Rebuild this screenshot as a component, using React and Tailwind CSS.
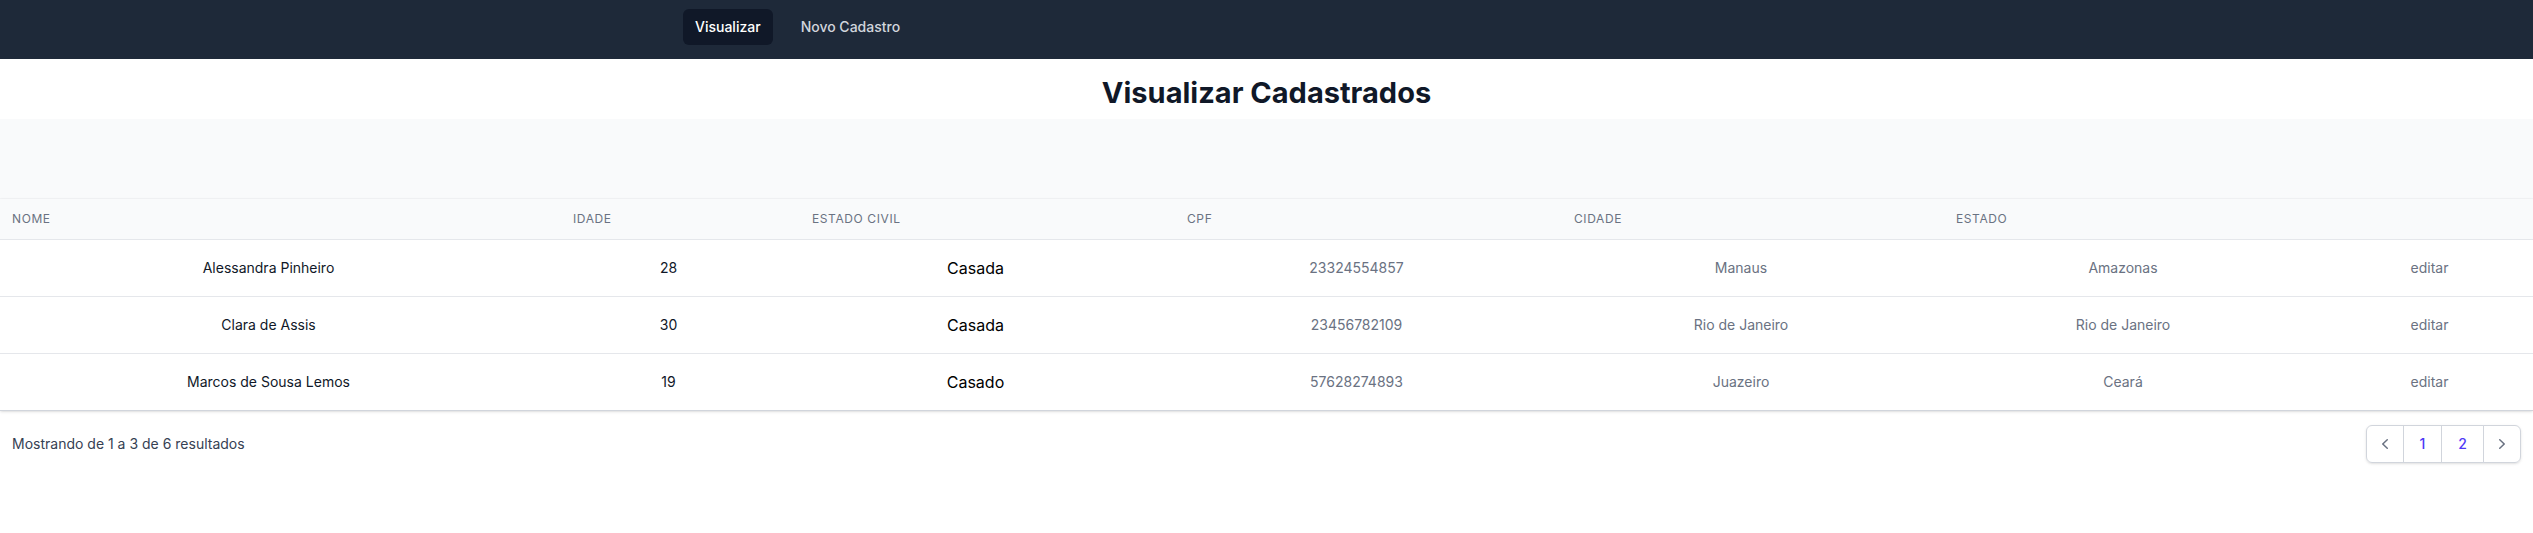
const pessoas = [
  { nome: 'Alessandra Pinheiro', idade: 28, civil: 'Casada', cpf: '23324554857', cidade: 'Manaus', estado: 'Amazonas' },
  { nome: 'Clara de Assis', idade: 30, civil: 'Casada', cpf: '23456782109', cidade: 'Rio de Janeiro', estado: 'Rio de Janeiro' },
  { nome: 'Marcos de Sousa Lemos', idade: 19, civil: 'Casado', cpf: '57628274893', cidade: 'Juazeiro', estado: 'Ceará' },
];

const colunas = ['Nome', 'Idade', 'Estado Civil', 'CPF', 'Cidade', 'Estado', ''];

const Navbar = () => (
  <nav className="bg-gray-800 h-[59px] pt-[9px] pl-[683px]">
    <div className="flex items-center gap-4">
      <a href="#" className="bg-gray-900 text-white px-3 py-2 rounded-md text-sm font-medium">
        Visualizar
      </a>
      <a href="#" className="text-gray-300 px-3 py-2 rounded-md text-sm font-medium hover:bg-gray-700 hover:text-white">
        Novo Cadastro
      </a>
    </div>
  </nav>
);

const Pagination = () => (
  <nav className="inline-flex -space-x-px rounded-md shadow-sm">
    <a href="#" className="inline-flex items-center rounded-l-md border border-gray-300 bg-white px-2 py-2 text-gray-500 hover:bg-gray-50">
      <svg className="h-5 w-5" viewBox="0 0 20 20" fill="currentColor">
        <path fillRule="evenodd" d="M12.79 5.23a.75.75 0 01-.02 1.06L8.832 10l3.938 3.71a.75.75 0 11-1.04 1.08l-4.5-4.25a.75.75 0 010-1.08l4.5-4.25a.75.75 0 011.06.02z" clipRule="evenodd" />
      </svg>
    </a>
    <a href="#" className="inline-flex items-center border border-gray-300 bg-white px-4 py-2 text-sm font-medium text-indigo-600">
      1
    </a>
    <a href="#" className="inline-flex items-center border border-gray-300 bg-white px-4 py-2 text-sm font-medium text-indigo-600">
      2
    </a>
    <a href="#" className="inline-flex items-center rounded-r-md border border-gray-300 bg-white px-2 py-2 text-gray-500 hover:bg-gray-50">
      <svg className="h-5 w-5" viewBox="0 0 20 20" fill="currentColor">
        <path fillRule="evenodd" d="M7.21 14.77a.75.75 0 01.02-1.06L11.168 10 7.23 6.29a.75.75 0 111.04-1.08l4.5 4.25a.75.75 0 010 1.08l-4.5 4.25a.75.75 0 01-1.06-.02z" clipRule="evenodd" />
      </svg>
    </a>
  </nav>
);

export default function App() {
  return (
    <div className="min-h-[533px] bg-white font-['Inter',sans-serif]">
      <Navbar />

      <h1 className="pt-4 pb-2 text-center text-[29px] leading-9 font-bold text-gray-900">Visualizar Cadastrados</h1>

      <div className="h-20 bg-gray-50 border-b border-gray-100" />

      <div className="border-b border-gray-300 shadow-sm">
        <table className="w-full table-fixed">
          <colgroup>
            <col className="w-[561px]" />
            <col className="w-[239px]" />
            <col className="w-[375px]" />
            <col className="w-[387px]" />
            <col className="w-[382px]" />
            <col className="w-[382px]" />
            <col />
          </colgroup>
          <thead className="bg-gray-50">
            <tr>
              {colunas.map((c, i) => (
                <th key={i} className="px-3 py-3 text-left text-xs font-normal uppercase tracking-wider text-gray-500">
                  {c}
                </th>
              ))}
            </tr>
          </thead>
          <tbody className="divide-y divide-gray-200 border-t border-gray-200 bg-white">
            {pessoas.map((p) => (
              <tr key={p.cpf}>
                <td className="py-4 pr-6 text-center text-sm text-gray-900">{p.nome}</td>
                <td className="py-4 pr-6 text-center text-sm text-gray-900">{p.idade}</td>
                <td className="py-4 pr-6 text-center text-base text-black">{p.civil}</td>
                <td className="py-4 pr-6 text-center text-sm text-gray-500">{p.cpf}</td>
                <td className="py-4 pr-6 text-center text-sm text-gray-500">{p.cidade}</td>
                <td className="py-4 pr-6 text-center text-sm text-gray-500">{p.estado}</td>
                <td className="py-4 text-center text-sm text-gray-500">
                  <a href="#">editar</a>
                </td>
              </tr>
            ))}
          </tbody>
        </table>
      </div>

      <div className="flex items-center justify-between px-3 py-3.5">
        <p className="text-sm text-gray-700">Mostrando de 1 a 3 de 6 resultados</p>
        <Pagination />
      </div>
    </div>
  );
}
